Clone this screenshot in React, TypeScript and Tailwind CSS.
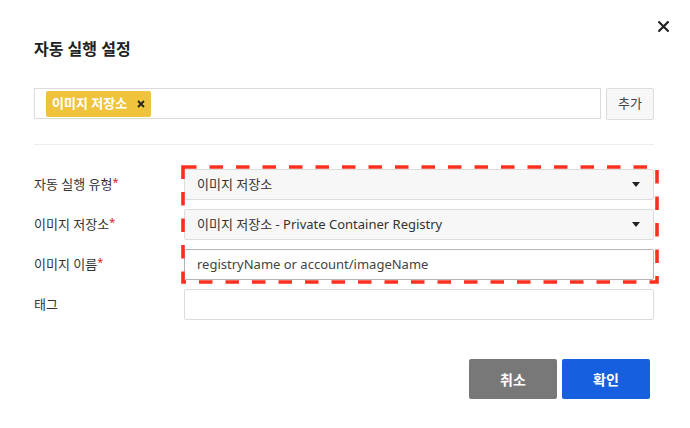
import React from 'react';

const Caret: React.FC = () => (
  <svg width="8" height="5" viewBox="0 0 8 5" className="shrink-0">
    <path d="M0 0 H8 L4 5 Z" fill="#222" />
  </svg>
);

const Label: React.FC<{ text: string; required?: boolean }> = ({ text, required }) => (
  <div className="w-[150px] shrink-0 text-[13px] text-[#333]">
    {text}
    {required && <span className="text-[#e02020] text-[11px] align-top relative top-[-1px]">*</span>}
  </div>
);

const App: React.FC = () => {
  return (
    <div className="relative w-[690px] h-[428px] bg-white font-['Noto_Sans','Noto_Sans_CJK_KR',sans-serif] text-[#333]">
      {/* close */}
      <button className="absolute top-[20px] left-[657px] w-[12px] h-[12px] flex items-center justify-center">
        <svg width="11" height="11" viewBox="0 0 11 11">
          <path d="M1.2 1.2 L9.8 9.8 M9.8 1.2 L1.2 9.8" stroke="#222" strokeWidth="2.2" strokeLinecap="square" />
        </svg>
      </button>

      <div className="px-[34px] pt-[37px] pr-[36px]">
        <h1 className="text-[16px] leading-[24px] font-bold text-[#222]">자동 실행 설정</h1>

        {/* tag input */}
        <div className="mt-[27px] flex gap-[5px]">
          <div className="flex-1 h-[31px] border border-[#dcdcdc] pl-[11px] flex items-center">
            <span className="h-[26px] px-[6px] rounded-[2px] bg-[#f0c33c] flex items-center gap-[10px] text-[13px] font-bold text-white">
              이미지 저장소
              <svg width="8" height="8" viewBox="0 0 8 8">
                <path d="M1 1 L7 7 M7 1 L1 7" stroke="#222" strokeWidth="1.8" />
              </svg>
            </span>
          </div>
          <button className="w-[48px] h-[32px] border border-[#dcdcdc] rounded-[2px] bg-[#f7f7f7] text-[13px] text-[#444]">
            추가
          </button>
        </div>

        <div className="mt-[24px] border-t border-[#eeeeee]" />

        {/* form rows */}
        <div className="mt-[24px] flex flex-col gap-[9px]">
          <div className="flex items-center">
            <Label text="자동 실행 유형" required />
            <div className="flex-1 h-[31px] border border-[#dcdcdc] rounded-[2px] bg-[#f7f7f7] pl-[12px] pr-[13px] flex items-center justify-between text-[13px] text-[#333]">
              이미지 저장소
              <Caret />
            </div>
          </div>
          <div className="flex items-center">
            <Label text="이미지 저장소" required />
            <div className="flex-1 h-[31px] border border-[#dcdcdc] rounded-[2px] bg-[#f7f7f7] pl-[12px] pr-[13px] flex items-center justify-between text-[13px] text-[#333]">
              이미지 저장소 - Private Container Registry
              <Caret />
            </div>
          </div>
          <div className="flex items-center">
            <Label text="이미지 이름" required />
            <div className="flex-1 h-[31px] border border-[#b5b5b5] rounded-[2px] bg-white pl-[12px] flex items-center text-[13px] text-[#444]">
              registryName or account/imageName
            </div>
          </div>
          <div className="flex items-center">
            <Label text="태그" />
            <div className="flex-1 h-[31px] border border-[#dcdcdc] rounded-[2px] bg-white" />
          </div>
        </div>

        {/* footer */}
        <div className="mt-[39px] pr-[4px] flex justify-end gap-[5px]">
          <button className="w-[88px] h-[40px] rounded-[2px] bg-[#787878] text-white text-[14px] font-bold">취소</button>
          <button className="w-[88px] h-[40px] rounded-[2px] bg-[#1660e0] text-white text-[14px] font-bold">확인</button>
        </div>
      </div>

      {/* annotation overlay */}
      <svg className="absolute left-[181px] top-[165px] pointer-events-none" width="478" height="119" viewBox="0 0 478 119">
        <rect x="2" y="2" width="474" height="115" fill="none" stroke="#fb3021" strokeWidth="3.6" strokeDasharray="13.5 13" />
      </svg>
    </div>
  );
};

export default App;
